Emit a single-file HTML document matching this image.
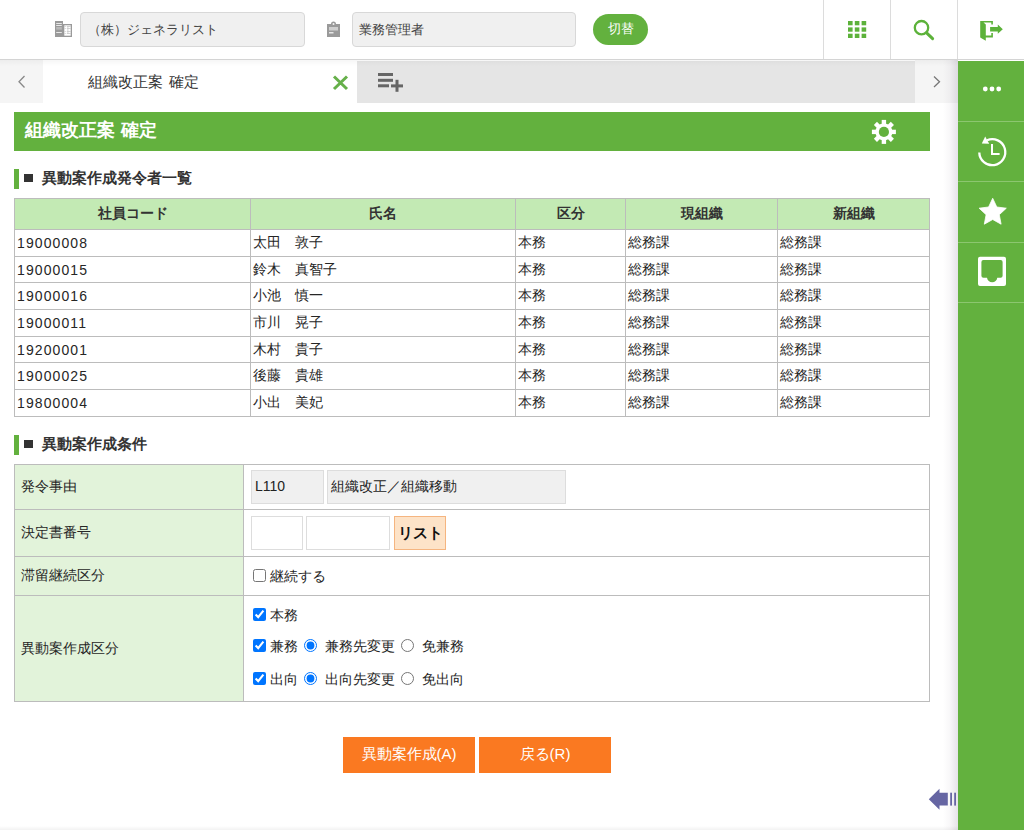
<!DOCTYPE html>
<html><head><meta charset="utf-8">
<style>
*{box-sizing:border-box;margin:0;padding:0}
html,body{width:1024px;height:830px;overflow:hidden;background:#fff;font-family:"Liberation Sans",sans-serif;color:#333;font-size:14px}
.abs{position:absolute}
#hdr{position:absolute;left:0;top:0;width:1024px;height:60px;background:#fff;border-bottom:1px solid #d4d4d4}
.box{position:absolute;background:#f0f0f0;border:1px solid #d8d8d8;border-radius:4px;font-size:13px;color:#444;line-height:33px;white-space:nowrap}
.sep{position:absolute;top:0;width:1px;height:59px;background:#dcdcdc}
#side{position:absolute;left:958px;top:61px;width:66px;height:769px;background:#63b13e}
.sdiv{position:absolute;left:0;width:66px;height:1px;background:#8cc66f}
table{border-collapse:collapse;table-layout:fixed}
#t1{position:absolute;left:14px;top:198px;width:916px;font-size:14px}
#t1 th{background:#c3eab4;border:1px solid #bcbcbc;height:31px;font-weight:bold;color:#333;text-align:center;padding:0}
#t1 td:first-child{letter-spacing:1.1px}
#t1 td{border:1px solid #bcbcbc;height:26.7px;padding:0 2px 0;color:#262626;text-align:left;white-space:nowrap}
.sec{position:absolute;left:14px;height:20px;border-left:5px solid #63b13e;padding-left:23px;font-weight:bold;font-size:15px;line-height:18px;color:#333;white-space:nowrap}
.sec:before{content:"";position:absolute;left:5px;top:5px;width:9px;height:8px;background:#333}
#t2{position:absolute;left:14px;top:464px;width:916px;font-size:14px}
#t2 td{border:1px solid #bcbcbc;color:#262626;position:relative}
#t2 td.lb{background:#e2f3da;width:229px;padding-left:6px}
.fbox{position:absolute;background:#f0f0f0;border:1px solid #ddd;line-height:31px;font-size:14px;color:#222;white-space:nowrap}
.ibox{position:absolute;background:#fff;border:1px solid #ddd}
.btn{position:absolute;top:737px;height:36px;background:#fa7921;color:#fff;font-size:15px;text-align:center;line-height:34px}
.ck{position:absolute;margin:0;width:13px;height:13px}
.tx{position:absolute;font-size:14px;line-height:15px;white-space:nowrap;color:#262626}
svg{position:absolute;overflow:visible}
</style></head><body>
<div id="hdr">
  <svg style="left:0;top:0" width="1" height="1">
    <g fill="#9a9a9a">
      <rect x="55" y="21" width="8" height="16"/>
      <rect x="63" y="24" width="9" height="13"/>
      <rect x="64.3" y="25.3" width="6.4" height="10.4" fill="#fff"/>
      <rect x="56.2" y="23" width="5.6" height="1" fill="#e8e8e8"/>
      <rect x="56.2" y="25" width="5.6" height="1" fill="#e8e8e8"/>
      <rect x="56.2" y="27" width="5.6" height="2.6" fill="#b8b8b8"/>
      <rect x="56.2" y="32" width="5.6" height="1" fill="#e8e8e8"/>
      <g fill="#c8c8c8"><rect x="64.6" y="26" width="1" height="1"/><rect x="66.8" y="26" width="4" height="0.8"/>
      <rect x="64.6" y="28" width="1" height="1"/><rect x="66.8" y="28" width="4" height="0.8"/>
      <rect x="64.6" y="31" width="1" height="1"/><rect x="66.8" y="31" width="4" height="0.8"/>
      <rect x="64.6" y="33" width="1" height="1"/><rect x="66.8" y="33" width="4" height="0.8"/>
      <rect x="67.5" y="26" width="0.8" height="8"/></g>
      <path d="M327 24 h4 a2.5 2.5 0 0 1 5 0 h4 v13 h-13 z"/>
      <rect x="329" y="27" width="9" height="3.5" fill="#cfcfcf"/>
      <rect x="329" y="32" width="4.5" height="1.5" fill="#e6e6e6"/>
      <circle cx="333.5" cy="24" r="1" fill="#f4f4f4"/>
    </g>
  </svg>
  <div class="box" style="left:80px;top:12px;width:225px;height:35px;padding-left:7px">（株）ジェネラリスト</div>
  <div class="box" style="left:352px;top:12px;width:224px;height:35px;padding-left:6px">業務管理者</div>
  <div class="abs" style="left:593px;top:14px;width:55px;height:31px;border-radius:16px;background:#63b13e;color:#fff;text-align:center;line-height:29px;font-size:13px">切替</div>
  <div class="sep" style="left:823px"></div>
  <div class="sep" style="left:890px"></div>
  <div class="sep" style="left:957px"></div>
  <svg style="left:0;top:0" width="1" height="1">
    <g fill="#5cb23a">
      <rect x="848" y="21" width="4.6" height="4.3"/><rect x="854.8" y="21" width="4.6" height="4.3"/><rect x="861.6" y="21" width="4.6" height="4.3"/>
      <rect x="848" y="27.4" width="4.6" height="4.3"/><rect x="854.8" y="27.4" width="4.6" height="4.3"/><rect x="861.6" y="27.4" width="4.6" height="4.3"/>
      <rect x="848" y="33.7" width="4.6" height="4.3"/><rect x="854.8" y="33.7" width="4.6" height="4.3"/><rect x="861.6" y="33.7" width="4.6" height="4.3"/>
      <path d="M980.2 21 H992.9 V24.5 H991.3 V22.6 H983.5 L985.8 24.6 V35.6 H991.3 V33 H992.9 V37.4 H985.8 V40.8 L980.2 37.4 Z"/>
      <path d="M990.1 26.9 H997.8 V24.5 L1002.8 29.2 L997.8 33.7 V31.6 H990.1 Z"/>
    </g>
    <circle cx="921.5" cy="27.7" r="6.7" fill="none" stroke="#5cb23a" stroke-width="2.3"/>
    <line x1="926.6" y1="32.8" x2="932.6" y2="38.6" stroke="#5cb23a" stroke-width="3" stroke-linecap="round"/>
  </svg>
</div>
<div class="abs" style="left:0;top:60px;width:43px;height:43px;background:#f5f5f5"></div>
<svg style="left:0;top:0" width="1" height="1"><path d="M24.5 76 L19 81.8 L24.5 87.5" fill="none" stroke="#888" stroke-width="1.3"/></svg>
<div class="abs" style="left:88px;top:60px;height:43px;line-height:43px;font-size:15px;color:#333;white-space:nowrap;word-spacing:2px">組織改正案 確定</div>
<svg style="left:0;top:0" width="1" height="1"><path d="M334 76.5 L347 89 M347 76.5 L334 89" stroke="#66b04a" stroke-width="3"/></svg>
<div class="abs" style="left:357px;top:61px;width:558px;height:42px;background:#e5e5e5"></div>
<svg style="left:0;top:0" width="1" height="1"><g fill="#666">
  <rect x="378" y="73" width="15" height="3"/><rect x="378" y="78.8" width="15" height="3"/><rect x="378" y="84.3" width="11" height="3"/>
  <rect x="391" y="84.4" width="12" height="3"/><rect x="395.5" y="79.8" width="3" height="12"/></g></svg>
<div class="abs" style="left:915px;top:60px;width:43px;height:43px;background:#f5f5f5"></div>
<svg style="left:0;top:0" width="1" height="1"><path d="M934 76.5 L939.5 81.8 L934 87" fill="none" stroke="#777" stroke-width="1.3"/></svg>
<div class="abs" style="left:0;top:60px;width:958px;height:6px;background:linear-gradient(to bottom,rgba(0,0,0,0.035),rgba(0,0,0,0))"></div>
<div class="abs" style="left:0;top:826px;width:958px;height:4px;background:linear-gradient(to bottom,rgba(0,0,0,0),rgba(0,0,0,0.05))"></div>
<div class="abs" style="left:943px;top:60px;width:15px;height:770px;background:linear-gradient(to right,rgba(40,20,60,0),rgba(40,20,60,0.03) 45%,rgba(40,20,60,0.12))"></div>
<div id="side">
  <div class="sdiv" style="top:60px"></div>
  <div class="sdiv" style="top:120px"></div>
  <div class="sdiv" style="top:181px"></div>
  <div class="sdiv" style="top:241px"></div>
</div>
<svg style="left:0;top:0" width="1" height="1">
  <g fill="#fff">
    <circle cx="985.3" cy="89" r="2.4"/><circle cx="992" cy="89" r="2.4"/><circle cx="998.7" cy="89" r="2.4"/>
    <path d="M992.7 198.3 L996.8 207.0 L1006.3 208.2 L999.3 214.7 L1001.1 224.2 L992.7 219.5 L984.3 224.2 L986.1 214.7 L979.1 208.2 L988.6 207.0 Z" stroke="#fff" stroke-width="0.8" stroke-linejoin="round"/>
    <path fill-rule="evenodd" d="M980 256.7 H1004 A2 2 0 0 1 1006 258.7 V284.1 A2 2 0 0 1 1004 286.1 H980 A2 2 0 0 1 978 284.1 V258.7 A2 2 0 0 1 980 256.7 Z M983.4 260.1 A2 2 0 0 0 981.4 262.1 V275.7 A2 2 0 0 0 983.4 277.7 H987 C987.5 280.5 989.5 282.3 992.2 282.3 C994.9 282.3 996.8 280.5 997.3 277.7 H1000.6 A2 2 0 0 0 1002.6 275.7 V262.1 A2 2 0 0 0 1000.6 260.1 Z"/>
    <path d="M985.2 136.5 L981.8 143.6 L989.2 143.8 Z"/>
    <rect x="991" y="144" width="2" height="11"/><rect x="991" y="153" width="8.6" height="2"/>
  </g>
  <path d="M979.3 152.4 A13 13 0 1 0 987 140.3" fill="none" stroke="#fff" stroke-width="2.3"/>
</svg>
<div class="abs" style="left:14px;top:112px;width:916px;height:39px;background:#63b13e;color:#fff;font-weight:bold;font-size:17.5px;line-height:37px;padding-left:11px;white-space:nowrap;word-spacing:1px">組織改正案 確定</div>
<svg style="left:0;top:0" width="1" height="1">
  <g fill="#fff" transform="translate(883.9 131.9)">
    <rect x="-2.2" y="-12" width="4.4" height="24"/>
    <rect x="-2.2" y="-12" width="4.4" height="24" transform="rotate(45)"/>
    <rect x="-2.2" y="-12" width="4.4" height="24" transform="rotate(90)"/>
    <rect x="-2.2" y="-12" width="4.4" height="24" transform="rotate(135)"/>
  </g>
  <circle cx="883.9" cy="131.9" r="6.8" fill="none" stroke="#fff" stroke-width="3.4"/>
  <circle cx="883.9" cy="131.9" r="5.1" fill="#63b13e"/>
</svg>
<div class="sec" style="top:169px">異動案作成発令者一覧</div>
<table id="t1">
<colgroup><col style="width:236px"><col style="width:265px"><col style="width:110px"><col style="width:152px"><col></colgroup>
<tr><th>社員コード</th><th>氏名</th><th>区分</th><th>現組織</th><th>新組織</th></tr>
<tr><td>19000008</td><td>太田　敦子</td><td>本務</td><td>総務課</td><td>総務課</td></tr>
<tr><td>19000015</td><td>鈴木　真智子</td><td>本務</td><td>総務課</td><td>総務課</td></tr>
<tr><td>19000016</td><td>小池　慎一</td><td>本務</td><td>総務課</td><td>総務課</td></tr>
<tr><td>19000011</td><td>市川　晃子</td><td>本務</td><td>総務課</td><td>総務課</td></tr>
<tr><td>19200001</td><td>木村　貴子</td><td>本務</td><td>総務課</td><td>総務課</td></tr>
<tr><td>19000025</td><td>後藤　貴雄</td><td>本務</td><td>総務課</td><td>総務課</td></tr>
<tr><td>19800004</td><td>小出　美妃</td><td>本務</td><td>総務課</td><td>総務課</td></tr>
</table>
<div class="sec" style="top:435px">異動案作成条件</div>
<table id="t2">
<colgroup><col style="width:229px"><col></colgroup>
<tr style="height:45px"><td class="lb">発令事由</td><td></td></tr>
<tr style="height:47px"><td class="lb">決定書番号</td><td></td></tr>
<tr style="height:39px"><td class="lb">滞留継続区分</td><td></td></tr>
<tr style="height:106px"><td class="lb">異動案作成区分</td><td></td></tr>
</table>
<div class="fbox" style="left:251px;top:470px;width:73px;height:34px;padding-left:3px">L110</div>
<div class="fbox" style="left:327px;top:470px;width:239px;height:34px;padding-left:3px">組織改正／組織移動</div>
<div class="ibox" style="left:251px;top:516px;width:52px;height:34px"></div>
<div class="ibox" style="left:306px;top:516px;width:84px;height:34px"></div>
<div class="abs" style="left:394px;top:516px;width:52px;height:34px;background:#fde3c8;border:1px solid #f5b580;font-weight:bold;font-size:15px;line-height:32px;text-align:center;color:#111">リスト</div>
<input class="ck" type="checkbox" style="left:253px;top:569px">
<div class="tx" style="left:270px;top:569px">継続する</div>
<input class="ck" type="checkbox" checked style="left:253px;top:608px">
<div class="tx" style="left:270px;top:608px">本務</div>
<input class="ck" type="checkbox" checked style="left:253px;top:639px">
<div class="tx" style="left:270px;top:639px">兼務</div>
<input class="ck" type="radio" name="a" checked style="left:304px;top:639px">
<div class="tx" style="left:325px;top:639px">兼務先変更</div>
<input class="ck" type="radio" name="a" style="left:401px;top:639px">
<div class="tx" style="left:422px;top:639px">免兼務</div>
<input class="ck" type="checkbox" checked style="left:253px;top:672px">
<div class="tx" style="left:270px;top:672px">出向</div>
<input class="ck" type="radio" name="b" checked style="left:304px;top:672px">
<div class="tx" style="left:325px;top:672px">出向先変更</div>
<input class="ck" type="radio" name="b" style="left:401px;top:672px">
<div class="tx" style="left:422px;top:672px">免出向</div>
<div class="btn" style="left:343px;width:132px">異動案作成(A)</div>
<div class="btn" style="left:479px;width:132px">戻る(R)</div>
<svg style="left:0;top:0" width="1" height="1"><g fill="#6666a3">
  <path d="M928.8 799.3 L939.5 788.8 V792.7 H947.8 V805.6 H939.5 V809.8 Z"/>
  <rect x="950.2" y="792.7" width="1.8" height="12.9"/><rect x="954.2" y="792.7" width="1.8" height="12.9"/></g></svg>
</body></html>
